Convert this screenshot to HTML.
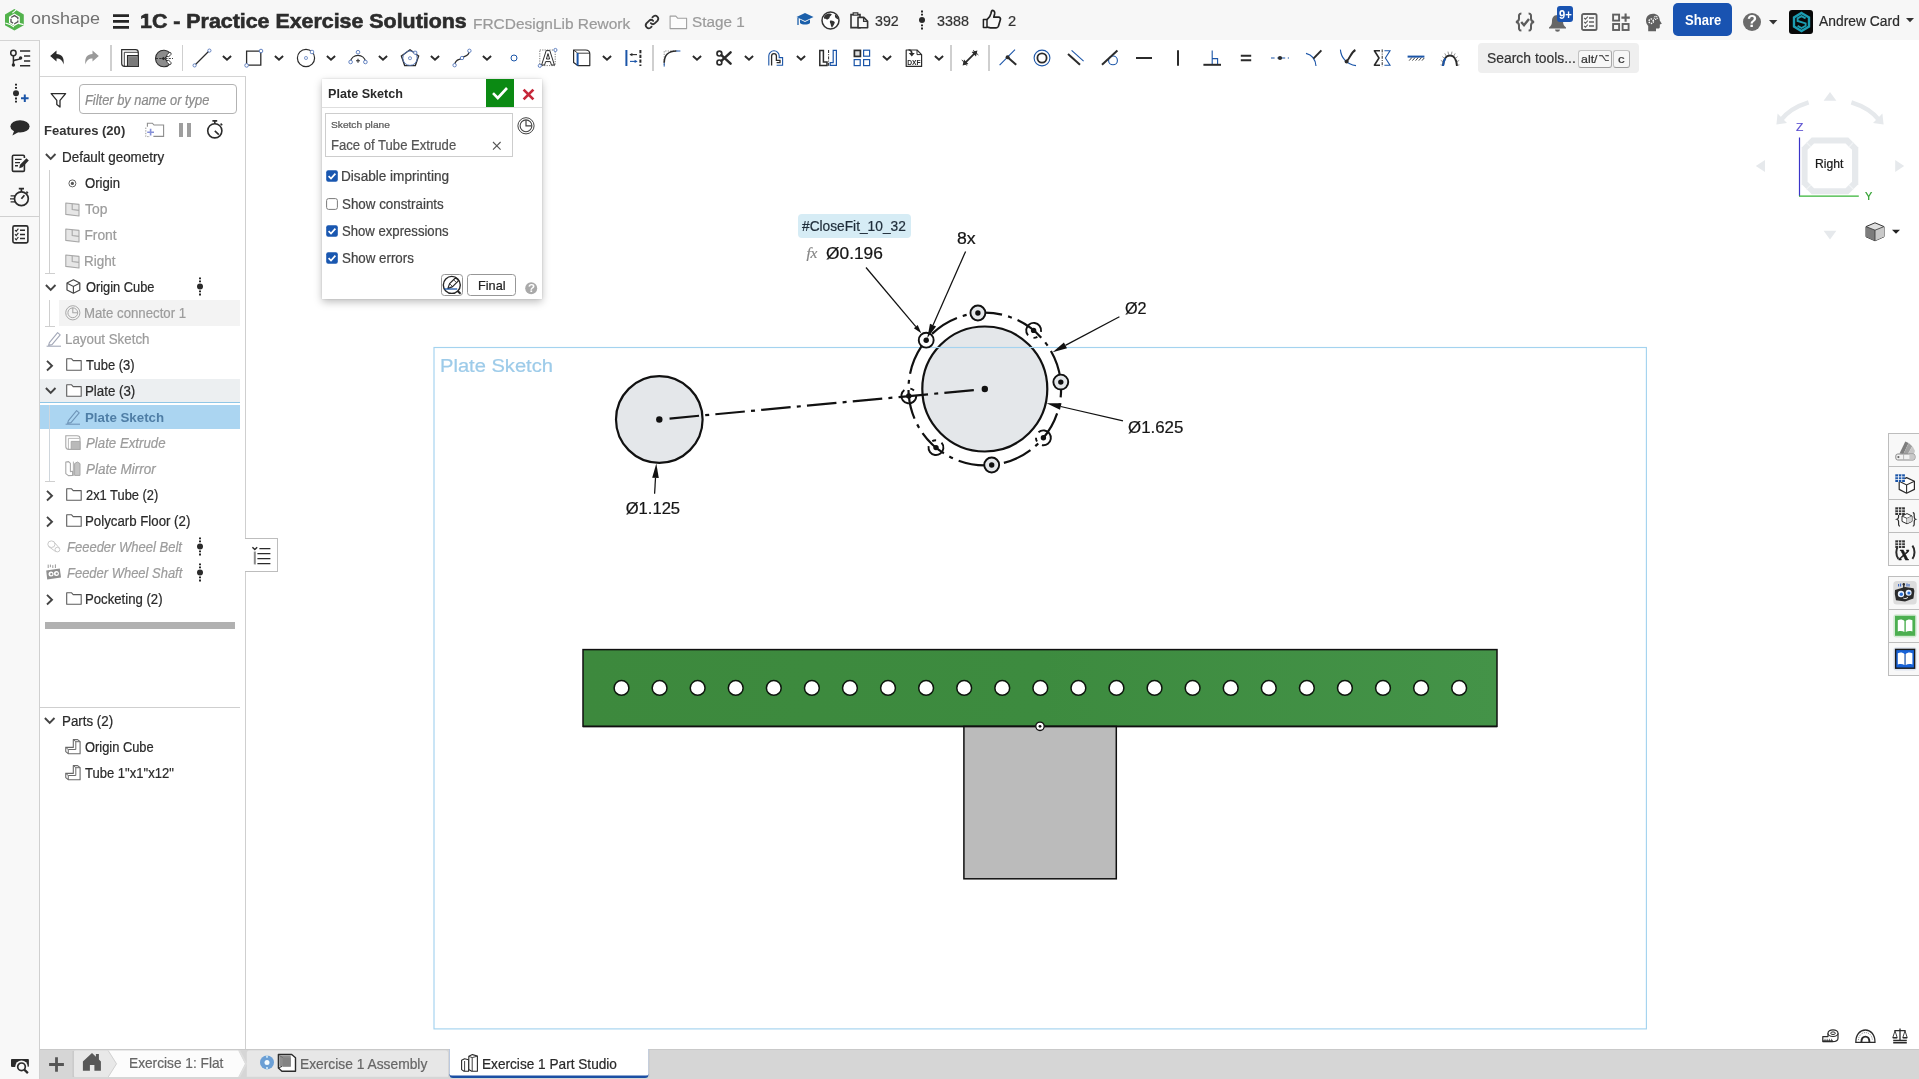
<!DOCTYPE html>
<html lang="en"><head><meta charset="utf-8"><title>1C - Practice Exercise Solutions | Exercise 1 Part Studio</title>
<style>
html,body{margin:0;padding:0;overflow:hidden}
body{width:1919px;height:1079px;position:relative;overflow:hidden;background:#fff;font-family:"Liberation Sans",sans-serif;color:#222}
.b{position:absolute;box-sizing:border-box;overflow:visible}
.t{position:absolute;white-space:nowrap;line-height:1;transform-origin:0 50%;-webkit-text-stroke:0.22px}
svg{display:block}
#root{position:absolute;left:0;top:0;width:1919px;height:1079px;overflow:hidden;will-change:transform}
</style></head><body><div id="root">
<div class="b" style="left:0px;top:0px;width:1919px;height:40px;background:#f7f7f7"></div>
<div class="b" style="left:40px;top:40px;width:1879px;height:36px;background:#fff"></div>
<svg class="b" style="left:4px;top:8px;" width="22" height="24" viewBox="0 0 22 24">
<path d="M10.4 1 L19.8 6.4 V17.2 L10.4 22.6 L1 17.2 V6.4 Z" fill="#52b24c"/>
<path d="M10.4 5.6 L15.8 8.7 V14.9 L10.4 18 L5 14.9 V8.7 Z" fill="#fff"/>
<path d="M12.4 1.6 L8.4 5.2 M19.6 16.6 L14.6 15.4 M1.4 15 L5.8 16.4 L10 19" stroke="#fff" stroke-width="1.1" fill="none"/>
<path d="M10.4 7.6 L13.8 9.6 V13.8 L10.4 15.8 L7 13.8 V9.6 Z" fill="none" stroke="#5a5a5a" stroke-width="1.4" stroke-dasharray="5.5 1.3"/>
</svg>
<span class="t" style="left:30.78px;top:11.00px;font-size:16px;color:#707070;transform:scaleX(1.1243);-webkit-text-stroke:0;">onshape</span>
<svg class="b" style="left:113px;top:13px;" width="17" height="17" viewBox="0 0 17 17"><path d="M0 2.55H16M0 8.45H16M0 14.4H16" stroke="#262626" stroke-width="2.7" fill="none"/></svg>
<span class="t" style="left:139.66px;top:11.00px;font-size:20px;color:#2c2c2c;font-weight:700;-webkit-text-stroke:0;transform:scaleX(1.0687);-webkit-text-stroke:0.6px;">1C - Practice Exercise Solutions</span>
<span class="t" style="left:473.26px;top:16.00px;font-size:15px;color:#9a9a9a;transform:scaleX(1.0305);">FRCDesignLib Rework</span>
<svg class="b" style="left:644px;top:14px;" width="16" height="16" viewBox="0 0 16 16"><g fill="none" stroke="#333" stroke-width="1.8" stroke-linecap="round"><path d="M6.8 9.2 a3 3 0 0 0 4.2 0 l2.6-2.6 a3 3 0 0 0-4.2-4.2 l-1 1"/><path d="M9.2 6.8 a3 3 0 0 0-4.2 0 l-2.6 2.6 a3 3 0 0 0 4.2 4.2 l1-1"/></g></svg>
<svg class="b" style="left:668.6px;top:14.6px;" width="19" height="15" viewBox="0 0 19 15"><path d="M1.1 13.6 V1.1 H6.8 L8.6 3.2 H17.6 V13.6 Z" fill="#fcfcfc" stroke="#a0a0a0" stroke-width="1.1" stroke-linejoin="round"/></svg>
<span class="t" style="left:691.81px;top:14.00px;font-size:15.5px;color:#9a9a9a;transform:scaleX(0.9853);">Stage 1</span>
<svg class="b" style="left:796px;top:12px;" width="18" height="16" viewBox="0 0 18 16"><path d="M9 1 L17.5 5 L9 9 L0.5 5 Z" fill="#1b5faa"/><path d="M4 7.5 V11 C6 13 12 13 14 11 V7.5 L9 10 Z" fill="#1b5faa"/><path d="M2 6 V13" stroke="#1b5faa" stroke-width="1.3"/></svg>
<svg class="b" style="left:821px;top:11px;" width="19" height="19" viewBox="0 0 19 19"><circle cx="9.5" cy="9.5" r="8.5" fill="#fff" stroke="#333" stroke-width="1.5"/><path d="M4.6 3.8 C6.6 2.2 9.4 2.2 10.8 3.2 C10.2 4.8 8.8 5 8.6 6.4 C8.4 7.6 7.2 7.6 6.6 8.6 C5.6 8.4 4.6 7.4 3.2 7.8 C2.6 6.2 3.4 4.8 4.6 3.8 Z M9.2 9.6 C10.8 9 12.8 9.8 13.8 11.2 C13.6 13 12.2 14.6 11 16.8 C10 15.6 9.8 14 9.6 12.8 C8.8 11.8 8.6 10.4 9.2 9.6 Z M14.2 3.4 C15.8 4.4 17.2 6.2 17.6 8.4 C16.6 8.4 15.8 7.4 15 7.2 C14 6.2 13.6 4.6 14.2 3.4 Z" fill="#333"/></svg>
<svg class="b" style="left:850px;top:11.5px;" width="19" height="17" viewBox="0 0 19 17"><path d="M1 2.6 H10 V15.6 H1 Z" fill="none" stroke="#333" stroke-width="1.6"/><path d="M3.2 0.8 H7.8 V3 H3.2 Z" fill="#f7f7f7" stroke="#333" stroke-width="1.2"/><path d="M8 5.4 H13.8 L17.6 9.2 V15.8 H8 Z" fill="#f7f7f7" stroke="#333" stroke-width="1.6" stroke-linejoin="round"/><path d="M13.6 5.6 V9.4 H17.4" fill="none" stroke="#333" stroke-width="1.3"/></svg>
<span class="t" style="left:874.97px;top:13.00px;font-size:15px;color:#333;transform:scaleX(0.9479);">392</span>
<svg class="b" style="left:917px;top:10px;" width="10" height="20" viewBox="0 0 10 20"><circle cx="5" cy="10" r="3" fill="#2a2a2a"/><path d="M4.1 0.6h1.8v1.8h-1.8z M4.1 3.8h1.8v1.8h-1.8z M4.1 14.4h1.8v1.8h-1.8z M4.1 17.6h1.8v1.8h-1.8z" fill="#111"/></svg>
<span class="t" style="left:937.46px;top:13.00px;font-size:15px;color:#333;transform:scaleX(0.9542);">3388</span>
<svg class="b" style="left:982px;top:9px;" width="20" height="21" viewBox="0 0 20 21"><path d="M1.4 10.4 H5 V18.6 H1.4 Z" fill="none" stroke="#222" stroke-width="1.5" stroke-linejoin="round"/><path d="M5 10.6 C7 9 8.6 6.6 9 4.4 C9.2 3 9.4 1.6 10.6 1.4 C12.4 1.4 13 3.2 12.6 5 L11.8 8.2 H16.6 C18 8.2 18.8 9.4 18.4 10.6 L16.4 17.2 C16 18.2 15.2 18.8 14.2 18.8 H8.4 C7 18.8 6.2 18.2 5 18" fill="none" stroke="#222" stroke-width="1.7" stroke-linejoin="round"/></svg>
<span class="t" style="left:1008.27px;top:13.00px;font-size:15px;color:#333;transform:scaleX(0.9763);">2</span>
<svg class="b" style="left:1515px;top:12px;" width="20" height="20" viewBox="0 0 20 20"><g fill="none" stroke="#5c5c5c" stroke-width="2"><path d="M6.4 1.4 C3.4 1.4 4 4 4 6.6 C4 8.6 3 9.6 1 10 C3 10.4 4 11.4 4 13.4 C4 16 3.4 18.6 6.4 18.6"/><path d="M13.6 1.4 C16.6 1.4 16 4 16 6.6 C16 8.6 17 9.6 19 10 C17 10.4 16 11.4 16 13.4 C16 16 16.6 18.6 13.6 18.6"/><path d="M6.2 10 L9 13.2 L14 7" stroke-width="2.4"/></g></svg>
<svg class="b" style="left:1548px;top:14px;" width="19" height="18" viewBox="0 0 19 18"><path d="M9.5 1 C5.5 1 4 4 4 7 C4 10.5 3 12 1 13.5 V14.5 H18 V13.5 C16 12 15 10.5 15 7 C15 4 13.5 1 9.5 1 Z" fill="#666"/><path d="M7 15.5 a2.5 2.3 0 0 0 5 0 Z" fill="#666"/></svg>
<div class="b" style="left:1557px;top:6px;width:16px;height:15.8px;background:#1953b1;border-radius:3px"></div>
<span class="t" style="left:1559.03px;top:9.00px;font-size:12px;color:#fff;font-weight:700;-webkit-text-stroke:0;transform:scaleX(0.9368);">9+</span>
<svg class="b" style="left:1581px;top:13px;" width="17" height="18" viewBox="0 0 17 18"><rect x="1" y="1" width="14.6" height="16" rx="1.6" fill="none" stroke="#606060" stroke-width="1.8"/><path d="M8 5H13M8 9H13M8 13H13" stroke="#606060" stroke-width="1.7"/><path d="M3.2 5 L4.5 6.3 L6.8 3.6 M3.2 9 L4.5 10.3 L6.8 7.6 M3.2 13 L4.5 14.3 L6.8 11.6" fill="none" stroke="#606060" stroke-width="1.1"/></svg>
<svg class="b" style="left:1612px;top:13px;" width="19" height="18" viewBox="0 0 19 18"><g fill="none" stroke="#606060" stroke-width="1.9"><rect x="1.1" y="1.6" width="6" height="6"/><rect x="1.1" y="11" width="6" height="6"/><rect x="10.6" y="11" width="6" height="6"/><path d="M13.6 0.4V8.8M9.4 4.6H17.8" stroke-width="2.1"/></g></svg>
<svg class="b" style="left:1645px;top:13px;" width="18" height="19" viewBox="0 0 18 19"><path d="M8 0.8 C3.5 0.8 1 4 1 7.5 C1 10 2 11.5 3.2 13 V18.2 H11 V15.6 H13.2 C14.4 15.6 14.8 14.8 14.8 13.8 V11.5 L16.8 10.8 L14.8 7.5 C14.8 3.5 12 0.8 8 0.8 Z" fill="#606060"/><circle cx="6.2" cy="8.2" r="2.2" fill="none" stroke="#fff" stroke-width="1.5" stroke-dasharray="1.3 0.9"/><circle cx="10.8" cy="4.8" r="1.5" fill="none" stroke="#fff" stroke-width="1.2" stroke-dasharray="1 0.7"/></svg>
<div class="b" style="left:1673px;top:3px;width:58.8px;height:33px;background:#1953b1;border-radius:5px"></div>
<span class="t" style="left:1685.14px;top:12.00px;font-size:15.4px;color:#fff;font-weight:700;-webkit-text-stroke:0;transform:scaleX(0.8483);">Share</span>
<svg class="b" style="left:1743px;top:13px;" width="18" height="18" viewBox="0 0 18 18"><circle cx="9" cy="9" r="9" fill="#6b6b6b"/></svg>
<span class="t" style="left:1747.06px;top:14.00px;font-size:16px;color:#fff;font-weight:700;-webkit-text-stroke:0;transform:scaleX(1.0294);">?</span>
<svg class="b" style="left:1769px;top:20px;" width="9" height="5" viewBox="0 0 9 5"><path d="M0 0H8.4L4.2 4.4Z" fill="#333"/></svg>
<div class="b" style="left:1789px;top:10px;width:24px;height:24px;background:#080808;border-radius:3px"></div>
<svg class="b" style="left:1790.5px;top:11px;" width="21" height="22" viewBox="0 0 21 22"><path d="M10.5 2 L18 6.4 V15.6 L10.5 20 L3 15.6 V6.4 Z" fill="none" stroke="#1c9db2" stroke-width="2.4"/><path d="M14.6 7.4 L10.5 5.2 L6.6 7.4 V10 L14.6 12.4 V14.8 L10.5 17 L6.6 14.8" fill="none" stroke="#1c9db2" stroke-width="1.9"/></svg>
<span class="t" style="left:1818.80px;top:13.00px;font-size:15.4px;color:#2c2c2c;transform:scaleX(0.8999);">Andrew Card</span>
<svg class="b" style="left:1906px;top:18px;" width="9" height="5" viewBox="0 0 9 5"><path d="M0 0H8L4 4.2Z" fill="#333"/></svg>
<svg class="b" style="left:48.7px;top:48px;" width="20" height="20" viewBox="0 0 20 20"><path transform="translate(0,0.8)" d="M1.2 7.2 L7.5 1.8 V5.2 C12.5 5.2 15.5 8.5 14.6 15.6 C13.4 11.4 11.3 9.6 7.5 9.6 V12.8 Z" fill="#2b2b2b"/></svg>
<svg class="b" style="left:80px;top:48px;" width="20" height="20" viewBox="0 0 20 20"><path transform="translate(0,0.8)" d="M18.8 7.2 L12.5 1.8 V5.2 C7.5 5.2 4.5 8.5 5.4 15.6 C6.6 11.4 8.7 9.6 12.5 9.6 V12.8 Z" fill="#9a9a9a"/></svg>
<svg class="b" style="left:120px;top:48px;" width="20" height="20" viewBox="0 0 20 20"><path d="M1.7 1.7 H15.5 Q18.3 1.7 18.3 4.5 V18.3 H4.5 Q1.7 18.3 1.7 15.5 Z" fill="#fff" stroke="#2b2b2b" stroke-width="1.2"/><path d="M4.3 4.3 H18 M4.3 4.3 V18" stroke="#2b2b2b" stroke-width="0.9" fill="none"/><path d="M7.5 7.5 H18.3 V18.3 H7.5 Z" fill="#8a8a8a" stroke="#2b2b2b" stroke-width="1.1"/><path d="M9.3 9.3 H18 V18 H9.3 Z" fill="#7a7a7a"/></svg>
<svg class="b" style="left:154px;top:48px;" width="20" height="20" viewBox="0 0 20 20"><path d="M16.2 5.2 A8.3 8.3 0 1 0 16.2 15.8 L10.6 10.5 Z" fill="#8c8c8c" stroke="#2b2b2b" stroke-width="1.1" stroke-linejoin="round"/><ellipse cx="15" cy="6.6" rx="2.6" ry="1.5" transform="rotate(-42 15 6.6)" fill="#fff" stroke="#2b2b2b" stroke-width="0.8"/><ellipse cx="15" cy="14.4" rx="2.6" ry="1.5" transform="rotate(42 15 14.4)" fill="#fff" stroke="#2b2b2b" stroke-width="0.8"/><path d="M2 10.5 H19" stroke="#2b2b2b" stroke-width="0.9" stroke-dasharray="2 1.2"/><path d="M7 10.5 L10 8.7 V12.3 Z" fill="#2b2b2b"/></svg>
<svg class="b" style="left:192px;top:48px;" width="20" height="20" viewBox="0 0 20 20"><path d="M3 17 L17 3" stroke="#2b2b2b" stroke-width="1.3"/><circle cx="2.6" cy="17.4" r="1.6" fill="#fff" stroke="#5577bb" stroke-width="0.9"/><circle cx="17.4" cy="2.6" r="1.6" fill="#fff" stroke="#5577bb" stroke-width="0.9"/></svg>
<svg class="b" style="left:244px;top:48px;" width="20" height="20" viewBox="0 0 20 20"><path d="M2.6 3.2 H16.8 V17.2 H2.6 Z" fill="none" stroke="#2b2b2b" stroke-width="1.3"/><circle cx="2.6" cy="17.4" r="1.8" fill="#fff" stroke="#5577bb" stroke-width="0.9"/><circle cx="17" cy="3" r="1.8" fill="#fff" stroke="#5577bb" stroke-width="0.9"/></svg>
<svg class="b" style="left:296px;top:48px;" width="20" height="20" viewBox="0 0 20 20"><circle cx="10" cy="10" r="8.6" fill="none" stroke="#2b2b2b" stroke-width="1.2"/><rect x="8.6" y="8.6" width="2.8" height="2.8" rx="1" fill="none" stroke="#5577bb" stroke-width="0.9"/><rect x="14.4" y="2.4" width="3.2" height="3.2" rx="0.8" fill="#fff" stroke="#5577bb" stroke-width="0.9"/></svg>
<svg class="b" style="left:348px;top:48px;" width="20" height="20" viewBox="0 0 20 20"><path d="M2.2 14 A8 8.6 0 0 1 17.8 14" fill="none" stroke="#2b2b2b" stroke-width="1.2"/><path d="M8 12.8 H12 M10 10.8 V14.8" stroke="#2b2b2b" stroke-width="1.1"/><circle cx="10" cy="4.2" r="1.8" fill="#fff" stroke="#5577bb" stroke-width="0.9"/><circle cx="2.6" cy="14" r="1.8" fill="#fff" stroke="#5577bb" stroke-width="0.9"/><circle cx="17.4" cy="14" r="1.8" fill="#fff" stroke="#5577bb" stroke-width="0.9"/></svg>
<svg class="b" style="left:400px;top:48px;" width="20" height="20" viewBox="0 0 20 20"><path d="M10 1.8 L18.6 8 L15.3 17.6 H4.7 L1.4 8 Z" fill="none" stroke="#2b2b2b" stroke-width="1.4"/><circle cx="10" cy="10.2" r="7.2" fill="none" stroke="#5577bb" stroke-width="0.9"/><rect x="8.6" y="8.8" width="2.8" height="2.8" rx="1" fill="none" stroke="#5577bb" stroke-width="0.9"/><rect x="13.8" y="3.2" width="3" height="3" rx="0.8" fill="#fff" stroke="#5577bb" stroke-width="0.9"/></svg>
<svg class="b" style="left:452px;top:48px;" width="20" height="20" viewBox="0 0 20 20"><path d="M2.6 17.2 C3.5 10 8 12.5 10 10 C12 7.5 16.8 9.5 17.4 2.8" fill="none" stroke="#2b2b2b" stroke-width="1.3"/><circle cx="2.6" cy="17.2" r="1.7" fill="#fff" stroke="#5577bb" stroke-width="0.9"/><circle cx="10" cy="10" r="1.7" fill="#fff" stroke="#5577bb" stroke-width="0.9"/><circle cx="17.4" cy="2.8" r="1.7" fill="#fff" stroke="#5577bb" stroke-width="0.9"/></svg>
<svg class="b" style="left:504px;top:48px;" width="20" height="20" viewBox="0 0 20 20"><circle cx="10" cy="10" r="3" fill="#fff" stroke="#1b55a8" stroke-width="1"/></svg>
<svg class="b" style="left:538px;top:48px;" width="20" height="20" viewBox="0 0 20 20"><path d="M1.8 2 H17.2 V17.6 H1.8 Z" fill="none" stroke="#555" stroke-width="0.8" stroke-dasharray="1.2 1.2"/><path d="M3.6 17 L8.2 2.6 H11.8 L16.4 17 H13.4 L12.4 13.6 H7.6 L6.6 17 Z M8.4 11 H11.6 L10 5.6 Z" fill="#fff" stroke="#2b2b2b" stroke-width="1" stroke-linejoin="round"/><circle cx="17.4" cy="2" r="1.6" fill="#fff" stroke="#5577bb" stroke-width="0.9"/><circle cx="1.8" cy="17.8" r="1.6" fill="#fff" stroke="#5577bb" stroke-width="0.9"/></svg>
<svg class="b" style="left:572px;top:48px;" width="20" height="20" viewBox="0 0 20 20"><path d="M1.6 2 H13.5 Q17.8 2 17.8 6 V17.6 H5.8 L1.6 14.4 Z" fill="#fff" stroke="#2b2b2b" stroke-width="1.2" stroke-linejoin="round"/><path d="M1.8 2.2 L5.8 5.2 H17.6" fill="none" stroke="#2b2b2b" stroke-width="0.9"/><path d="M5.6 5 V17.6" stroke="#1b55a8" stroke-width="2"/></svg>
<svg class="b" style="left:624px;top:48px;" width="20" height="20" viewBox="0 0 20 20"><path d="M2.4 2 V18" stroke="#1b55a8" stroke-width="2"/><path d="M16.4 2 V18" stroke="#2b2b2b" stroke-width="2" stroke-dasharray="3.2 1.6"/><path d="M6 6.6 H13" stroke="#2b2b2b" stroke-width="1.1"/><path d="M5.4 6.6 L8.4 4.9 V8.3 Z" fill="#2b2b2b"/><path d="M6 13.4 H12.6" stroke="#1b55a8" stroke-width="1.1"/><path d="M13.6 13.4 L10.6 11.7 V15.1 Z" fill="#1b55a8"/></svg>
<svg class="b" style="left:661.5px;top:48px;" width="20" height="20" viewBox="0 0 20 20"><path d="M2.2 17 V3 H16" fill="none" stroke="#777" stroke-width="0.8" stroke-dasharray="1.3 1.2"/><path d="M2.2 18.6 V14.6 M14 3 H18.4" stroke="#1b55a8" stroke-width="1"/><path d="M2.2 14.8 C2.2 7.5 6.5 3 14.2 3" fill="none" stroke="#2b2b2b" stroke-width="1.6"/></svg>
<svg class="b" style="left:713.5px;top:48px;" width="20" height="20" viewBox="0 0 20 20"><circle cx="5.4" cy="5.6" r="2.4" fill="none" stroke="#2b2b2b" stroke-width="1.7"/><circle cx="5.4" cy="14.4" r="2.4" fill="none" stroke="#2b2b2b" stroke-width="1.7"/><path d="M7.4 7.2 L16.6 15.6 M7.4 12.8 L16.6 4.4" stroke="#2b2b2b" stroke-width="2.5" stroke-linecap="round"/></svg>
<svg class="b" style="left:766px;top:48px;" width="20" height="20" viewBox="0 0 20 20"><path d="M2.8 17.4 V8 A5.2 5.2 0 0 1 13.2 8 V9.6 H16.6 V17.2 H10.6" fill="none" stroke="#1b55a8" stroke-width="1.1"/><path d="M5.6 17.4 V8 A2.4 2.4 0 0 1 10.4 8 V12.4 H14 V14.6 H10.6" fill="none" stroke="#2b2b2b" stroke-width="1.3"/></svg>
<svg class="b" style="left:818px;top:48px;" width="20" height="20" viewBox="0 0 20 20"><path d="M1.8 2.4 H5.4 V14 H9 V17.4 H1.8 Z" fill="#fff" stroke="#2b2b2b" stroke-width="1.5"/><path d="M10.6 2 V18" stroke="#2b2b2b" stroke-width="1" stroke-dasharray="3 1.2 1 1.2"/><path d="M18.4 2.4 H15.2 V14.6 H12.2 V17.4 H18.4 Z" fill="none" stroke="#1b55a8" stroke-width="1.2"/></svg>
<svg class="b" style="left:852px;top:48px;" width="20" height="20" viewBox="0 0 20 20"><rect x="2.4" y="2.4" width="6" height="6" fill="#ddd" stroke="#2b2b2b" stroke-width="1.7"/><rect x="11.6" y="2.2" width="6" height="6" fill="none" stroke="#1b55a8" stroke-width="1.2"/><rect x="2.2" y="11.6" width="6" height="6" fill="none" stroke="#1b55a8" stroke-width="1.2"/><rect x="11.6" y="11.6" width="6" height="6" fill="none" stroke="#1b55a8" stroke-width="1.2"/></svg>
<svg class="b" style="left:904px;top:48px;" width="20" height="20" viewBox="0 0 20 20"><path d="M2.2 2 H13 L17.6 6.6 V18.4 H2.2 Z" fill="#fff" stroke="#2b2b2b" stroke-width="1.2" stroke-linejoin="round"/><path d="M13 2 V6.6 H17.6" fill="none" stroke="#2b2b2b" stroke-width="1"/><path d="M4.5 1.2 C7 1.2 8.6 2.6 8.6 5 H10.8 L7.8 8.6 L4.8 5 H6.8 C6.8 3.4 6 2.6 4.5 2.2 Z" fill="#2b2b2b"/><text x="3.2" y="16.6" font-family="Liberation Sans,sans-serif" font-weight="700" font-size="6.6" fill="#2b2b2b" textLength="13.4" lengthAdjust="spacingAndGlyphs">DXF</text></svg>
<svg class="b" style="left:960px;top:48px;" width="20" height="20" viewBox="0 0 20 20"><path d="M4.4 15.6 L15.6 4.4" stroke="#2b2b2b" stroke-width="1.8"/><path d="M2.6 17.4 L4 11.6 L8.4 16 Z M17.4 2.6 L11.6 4 L16 8.4 Z" fill="#2b2b2b"/><path d="M13.2 2.2 L18.4 7 M1.8 11.8 L6.8 17.6" stroke="#2b2b2b" stroke-width="0.9"/></svg>
<svg class="b" style="left:997.5px;top:48px;" width="20" height="20" viewBox="0 0 20 20"><path d="M1.6 17.2 L17 1.6" stroke="#1b55a8" stroke-width="1.1"/><path d="M9.6 9.2 L18.2 16.8" stroke="#2b2b2b" stroke-width="2"/><circle cx="9.6" cy="9.2" r="2" fill="#2b2b2b"/></svg>
<svg class="b" style="left:1032px;top:48px;" width="20" height="20" viewBox="0 0 20 20"><circle cx="10" cy="10" r="7.9" fill="none" stroke="#1b55a8" stroke-width="1.1"/><circle cx="10" cy="10" r="4.6" fill="none" stroke="#2b2b2b" stroke-width="1.8"/></svg>
<svg class="b" style="left:1065.5px;top:48px;" width="20" height="20" viewBox="0 0 20 20"><path d="M2 6 L14 16.8" stroke="#2b2b2b" stroke-width="2"/><path d="M5.6 2.4 L17.6 13.2" stroke="#1b55a8" stroke-width="1.1"/></svg>
<svg class="b" style="left:1100px;top:48px;" width="20" height="20" viewBox="0 0 20 20"><circle cx="13" cy="12.4" r="4.4" fill="none" stroke="#1b55a8" stroke-width="1.1"/><path d="M2 16.8 L17.4 2.4" stroke="#2b2b2b" stroke-width="2"/></svg>
<svg class="b" style="left:1133.7px;top:48px;" width="20" height="20" viewBox="0 0 20 20"><path d="M2 10 H18" stroke="#2b2b2b" stroke-width="2"/></svg>
<svg class="b" style="left:1167.7px;top:48px;" width="20" height="20" viewBox="0 0 20 20"><path d="M10 2.2 V17.8" stroke="#2b2b2b" stroke-width="2"/></svg>
<svg class="b" style="left:1201.8px;top:48px;" width="20" height="20" viewBox="0 0 20 20"><path d="M10.2 2.4 V16.6 M10.2 10.6 H15.6 V16.6" fill="none" stroke="#1b55a8" stroke-width="1.1"/><path d="M1.4 16.8 H19" stroke="#2b2b2b" stroke-width="2"/></svg>
<svg class="b" style="left:1236px;top:48px;" width="20" height="20" viewBox="0 0 20 20"><path d="M4.8 7.8 H15.2 M4.8 12.2 H15.2" stroke="#2b2b2b" stroke-width="2"/></svg>
<svg class="b" style="left:1270px;top:48px;" width="20" height="20" viewBox="0 0 20 20"><path d="M1 10 H19" stroke="#1b55a8" stroke-width="1.1" stroke-dasharray="3.6 2.6 8 2.6 3.6"/><circle cx="10" cy="10" r="2.1" fill="#2b2b2b"/></svg>
<svg class="b" style="left:1303.7px;top:48px;" width="20" height="20" viewBox="0 0 20 20"><path d="M2 5.4 C7.5 6.8 11.4 11 12 18" fill="none" stroke="#1b55a8" stroke-width="1.1"/><path d="M9.4 10.6 L17.4 2.4" stroke="#2b2b2b" stroke-width="2"/></svg>
<svg class="b" style="left:1337.5px;top:48px;" width="20" height="20" viewBox="0 0 20 20"><path d="M2.4 1.6 C3 9.5 8.5 16.4 18 17.6" fill="none" stroke="#1b55a8" stroke-width="1.1"/><path d="M8.4 13.4 C12 11 12.6 4.4 17.4 2" fill="none" stroke="#2b2b2b" stroke-width="2"/><circle cx="8.6" cy="13.4" r="2" fill="#2b2b2b"/></svg>
<svg class="b" style="left:1372px;top:48px;" width="20" height="20" viewBox="0 0 20 20"><path d="M8 2.8 H2.4 L7 10 L2.4 17.2 H8" fill="none" stroke="#2b2b2b" stroke-width="1.6" stroke-linejoin="round"/><path d="M12.4 2.8 H18 L13.4 10 L18 17.2 H12.4" fill="none" stroke="#1b55a8" stroke-width="1.1"/><path d="M10.2 1.4 V18.6" stroke="#2b2b2b" stroke-width="1" stroke-dasharray="3 1.2 1 1.2"/></svg>
<svg class="b" style="left:1405.5px;top:48px;" width="20" height="20" viewBox="0 0 20 20"><path d="M1.6 8.6 H18.4" stroke="#1b55a8" stroke-width="2"/><path d="M3.2 12.6 L5.8 9.6 M6.4 12.6 L9 9.6 M9.6 12.6 L12.2 9.6 M12.8 12.6 L15.4 9.6 M16 12.6 L18.2 10" stroke="#2b2b2b" stroke-width="0.9"/></svg>
<svg class="b" style="left:1440px;top:48px;" width="20" height="20" viewBox="0 0 20 20"><path d="M3 18 C3.6 11 6.4 7.6 10 7.6 C13.6 7.6 16.4 11 17 18" fill="none" stroke="#2b2b2b" stroke-width="2"/><path d="M2.6 17.4 L0.6 16.8 M3 13.6 L0.8 12.4 M4.4 10.4 L2.4 8.6 M6.2 8 L4.8 5.4 M8.6 6.8 L8 3.6 M11.4 6.8 L12 3.6 M13.8 8 L15.2 5.4 M15.6 10.4 L17.6 8.6 M17 13.6 L19.2 12.4 M17.4 17.4 L19.4 16.8" stroke="#777" stroke-width="0.8"/><path d="M3 18 C3.3 14.5 4.2 12 5.4 10.4" fill="none" stroke="#1b55a8" stroke-width="2"/></svg>
<svg class="b" style="left:222px;top:55.2px;" width="10" height="6" viewBox="0 0 10 6"><path d="M0.9 1 L5 4.8 L9.1 1" fill="none" stroke="#2b2b2b" stroke-width="1.9"/></svg>
<svg class="b" style="left:274px;top:55.2px;" width="10" height="6" viewBox="0 0 10 6"><path d="M0.9 1 L5 4.8 L9.1 1" fill="none" stroke="#2b2b2b" stroke-width="1.9"/></svg>
<svg class="b" style="left:326px;top:55.2px;" width="10" height="6" viewBox="0 0 10 6"><path d="M0.9 1 L5 4.8 L9.1 1" fill="none" stroke="#2b2b2b" stroke-width="1.9"/></svg>
<svg class="b" style="left:378px;top:55.2px;" width="10" height="6" viewBox="0 0 10 6"><path d="M0.9 1 L5 4.8 L9.1 1" fill="none" stroke="#2b2b2b" stroke-width="1.9"/></svg>
<svg class="b" style="left:429.8px;top:55.2px;" width="10" height="6" viewBox="0 0 10 6"><path d="M0.9 1 L5 4.8 L9.1 1" fill="none" stroke="#2b2b2b" stroke-width="1.9"/></svg>
<svg class="b" style="left:482px;top:55.2px;" width="10" height="6" viewBox="0 0 10 6"><path d="M0.9 1 L5 4.8 L9.1 1" fill="none" stroke="#2b2b2b" stroke-width="1.9"/></svg>
<svg class="b" style="left:602px;top:55.2px;" width="10" height="6" viewBox="0 0 10 6"><path d="M0.9 1 L5 4.8 L9.1 1" fill="none" stroke="#2b2b2b" stroke-width="1.9"/></svg>
<svg class="b" style="left:692px;top:55.2px;" width="10" height="6" viewBox="0 0 10 6"><path d="M0.9 1 L5 4.8 L9.1 1" fill="none" stroke="#2b2b2b" stroke-width="1.9"/></svg>
<svg class="b" style="left:744px;top:55.2px;" width="10" height="6" viewBox="0 0 10 6"><path d="M0.9 1 L5 4.8 L9.1 1" fill="none" stroke="#2b2b2b" stroke-width="1.9"/></svg>
<svg class="b" style="left:796px;top:55.2px;" width="10" height="6" viewBox="0 0 10 6"><path d="M0.9 1 L5 4.8 L9.1 1" fill="none" stroke="#2b2b2b" stroke-width="1.9"/></svg>
<svg class="b" style="left:882px;top:55.2px;" width="10" height="6" viewBox="0 0 10 6"><path d="M0.9 1 L5 4.8 L9.1 1" fill="none" stroke="#2b2b2b" stroke-width="1.9"/></svg>
<svg class="b" style="left:934px;top:55.2px;" width="10" height="6" viewBox="0 0 10 6"><path d="M0.9 1 L5 4.8 L9.1 1" fill="none" stroke="#2b2b2b" stroke-width="1.9"/></svg>
<div class="b" style="left:110.15px;top:45px;width:1.5px;height:26px;background:#cfcfcf"></div>
<div class="b" style="left:181.95px;top:45px;width:1.5px;height:26px;background:#cfcfcf"></div>
<div class="b" style="left:652.15px;top:45px;width:1.5px;height:26px;background:#cfcfcf"></div>
<div class="b" style="left:950.15px;top:45px;width:1.5px;height:26px;background:#cfcfcf"></div>
<div class="b" style="left:988.15px;top:45px;width:1.5px;height:26px;background:#cfcfcf"></div>
<div class="b" style="left:1478px;top:42.5px;width:160.7px;height:30.8px;background:#efefef;border-radius:4px"></div>
<span class="t" style="left:1487.37px;top:50.00px;font-size:15.4px;color:#333;transform:scaleX(0.9028);">Search tools...</span>
<div class="b" style="left:1578px;top:50px;width:34px;height:18.4px;background:#f7f7f7;border:1px solid #c2c2c2;border-bottom:1.6px solid #9c9c9c;border-right-color:#a8a8a8;border-radius:3px"></div>
<span class="t" style="left:1581.47px;top:54.00px;font-size:11.5px;color:#333;transform:scaleX(1.0764);">alt/</span>
<span class="t" style="left:1598.5px;top:52.5px;font-size:9.5px;font-family:'DejaVu Sans',sans-serif;color:#333">⌥</span>
<div class="b" style="left:1613px;top:50px;width:16.5px;height:18.4px;background:#f7f7f7;border:1px solid #c2c2c2;border-bottom:1.6px solid #9c9c9c;border-right-color:#a8a8a8;border-radius:3px"></div>
<span class="t" style="left:1617.74px;top:54.00px;font-size:11.5px;color:#333;transform:scaleX(1.1460);">c</span>
<div class="b" style="left:0px;top:40px;width:40px;height:1009px;background:#f8f8f8;border-top:1px solid #d4d4d4;border-right:1px solid #d0d0d0"></div>
<svg class="b" style="left:10px;top:48px;" width="21" height="20" viewBox="0 0 21 20"><circle cx="3.4" cy="5" r="2.7" fill="none" stroke="#2b2b2b" stroke-width="1.5"/><path d="M3.4 7.8 V16 M3.4 13.6 C3.4 10.8 10.4 12.6 10.4 10" fill="none" stroke="#2b2b2b" stroke-width="1.5"/><circle cx="3.4" cy="17" r="1.7" fill="#2b2b2b"/><circle cx="10.6" cy="10" r="1.7" fill="#2b2b2b"/><path d="M10 3 H20.2 M14 8 H20.2 M14 13 H20.2 M10 17.8 H20.2" stroke="#2b2b2b" stroke-width="1.5"/></svg>
<div class="b" style="left:0px;top:1049px;width:40px;height:30px;background:#f8f8f8;border-right:1px solid #d0d0d0"></div>
<svg class="b" style="left:12px;top:83px;" width="18" height="20" viewBox="0 0 18 20"><circle cx="4" cy="10.2" r="3" fill="#2b2b2b"/><path d="M3.1 0.8h1.8v1.8h-1.8z M3.1 4h1.8v1.8h-1.8z M3.1 14.6h1.8v1.8h-1.8z M3.1 17.8h1.8v1.8h-1.8z" fill="#111"/><path d="M12.8 11.4V19M9 15.2H16.6" stroke="#1b55a8" stroke-width="2"/></svg>
<svg class="b" style="left:10px;top:120px;" width="20" height="16" viewBox="0 0 20 16"><ellipse cx="10" cy="6.4" rx="9.6" ry="6.2" fill="#2b2b2b"/><path d="M4.4 10 L2.4 15.6 L9.6 11.6 Z" fill="#2b2b2b"/></svg>
<svg class="b" style="left:11px;top:154px;" width="19" height="19" viewBox="0 0 19 19"><path d="M13.4 9.6 V16.2 Q13.4 17.4 12.2 17.4 H2.6 Q1.4 17.4 1.4 16.2 V2.4 Q1.4 1.2 2.6 1.2 H12.2 Q13.4 1.2 13.4 2.4 V4" fill="none" stroke="#2b2b2b" stroke-width="1.6"/><path d="M4 5.4H10.6M4 8.6H9M4 11.8H7" stroke="#2b2b2b" stroke-width="1.4"/><path d="M8.2 14.2 L9 10.8 L15.4 4.2 L17.8 6.6 L11.4 13.2 Z" fill="#2b2b2b"/></svg>
<svg class="b" style="left:10px;top:187px;" width="20" height="20" viewBox="0 0 20 20"><circle cx="11.4" cy="11.8" r="6.9" fill="none" stroke="#2b2b2b" stroke-width="1.7"/><path d="M8.8 1.6H14M11.4 1.6V5M11.4 11.8L14.4 8.2" stroke="#2b2b2b" stroke-width="1.7" fill="none"/><path d="M16.4 4.6 L18 6.2" stroke="#2b2b2b" stroke-width="1.5"/><path d="M0.6 8.8H5M0 11.8H4M0.6 14.8H5" stroke="#2b2b2b" stroke-width="1.2"/></svg>
<div class="b" style="left:0px;top:216px;width:39px;height:1px;background:#d0d0d0"></div>
<svg class="b" style="left:12px;top:225px;" width="17" height="19" viewBox="0 0 17 19"><rect x="0.9" y="0.9" width="15" height="17" rx="1.6" fill="none" stroke="#2b2b2b" stroke-width="1.6"/><path d="M8 5.2H13M8 9.4H13M8 13.6H13" stroke="#2b2b2b" stroke-width="1.5"/><path d="M3 5 L4.2 6.4 L6.4 3.6 M3 9.2 L4.2 10.6 L6.4 7.8 M3 13.4 L4.2 14.8 L6.4 12" fill="none" stroke="#2b2b2b" stroke-width="1.1"/></svg>
<svg class="b" style="left:10px;top:1058px;" width="20" height="17" viewBox="0 0 20 17"><rect x="1" y="1.1" width="17.9" height="7.8" rx="0.8" fill="#2b2b2b"/><circle cx="11.5" cy="8.8" r="6.3" fill="#f8f8f8"/><circle cx="11.5" cy="8.8" r="3.8" fill="#f8f8f8" stroke="#2b2b2b" stroke-width="1.7"/><path d="M14.3 11.7 L17.9 15.1" stroke="#2b2b2b" stroke-width="2.3"/></svg>
<div class="b" style="left:40px;top:76px;width:206px;height:973px;background:#fff;border-top:1px solid #d4d4d4;border-right:1px solid #cfcfcf"></div>
<svg class="b" style="left:50px;top:92px;" width="17" height="17" viewBox="0 0 17 17"><path d="M1.2 1.6 H15.6 L10 8.4 V15 L6.8 12.6 V8.4 Z" fill="none" stroke="#2b2b2b" stroke-width="1.3" stroke-linejoin="round"/></svg>
<div class="b" style="left:79px;top:84px;width:158px;height:30px;border:1px solid #b3b3b3;border-radius:4px;background:#fff"></div>
<span class="t" style="left:85.11px;top:93.00px;font-size:14px;color:#8c8c8c;font-style:italic;transform:scaleX(0.9184);">Filter by name or type</span>
<span class="t" style="left:43.75px;top:124.00px;font-size:13.6px;color:#333;font-weight:700;-webkit-text-stroke:0;transform:scaleX(0.9599);">Features (20)</span>
<svg class="b" style="left:145px;top:122px;" width="20" height="16" viewBox="0 0 20 16"><path d="M2.4 4.8 V1.2 H7.4 L9 3 H18.6 V14.4 H8.4" fill="none" stroke="#8e8e8e" stroke-width="1.1"/><path d="M0.8 5.6V14.6H5" fill="none" stroke="#8e8e8e" stroke-width="0.9" stroke-dasharray="1.4 1.2"/><path d="M5.6 6.8V13.6M2.2 10.2H9" stroke="#8590d8" stroke-width="1.6"/></svg>
<div class="b" style="left:179px;top:123px;width:4px;height:13.8px;background:#9e9e9e"></div>
<div class="b" style="left:187px;top:123px;width:4px;height:13.8px;background:#9e9e9e"></div>
<svg class="b" style="left:206px;top:120px;" width="18" height="19" viewBox="0 0 18 19"><circle cx="8.8" cy="10.8" r="7.1" fill="none" stroke="#2b2b2b" stroke-width="1.6"/><path d="M6.4 0.9H11.2M8.8 0.9V4M8.8 10.8L12.8 14.6" stroke="#2b2b2b" stroke-width="1.6" fill="none"/><path d="M14.6 3.6 L16.2 5.2" stroke="#2b2b2b" stroke-width="1.5"/></svg>
<svg class="b" style="left:44.6px;top:153px;" width="12" height="8" viewBox="0 0 12 8"><path d="M0.9 1 L5.7 6 L10.5 1" fill="none" stroke="#444" stroke-width="1.9"/></svg>
<span class="t" style="left:62.43px;top:151.00px;font-size:13.8px;color:#2a2a2a;transform:scaleX(0.9723);">Default geometry</span>
<div class="b" style="left:49px;top:169.5px;width:1px;height:104px;background:#cfcfcf"></div>
<div class="b" style="left:45px;top:273px;width:9.5px;height:1px;background:#cfcfcf"></div>
<svg class="b" style="left:68px;top:179px;" width="9" height="9" viewBox="0 0 9 9"><circle cx="4.4" cy="4.4" r="3.5" fill="#fff" stroke="#555" stroke-width="0.9"/><circle cx="4.4" cy="4.4" r="1.6" fill="#555"/></svg>
<span class="t" style="left:84.91px;top:177.00px;font-size:13.8px;color:#2a2a2a;transform:scaleX(0.9539);">Origin</span>
<svg class="b" style="left:65px;top:201.5px;" width="15" height="15" viewBox="0 0 15 15"><path d="M0.8 1 L14 2.4 V14 L0.8 12.4 Z" fill="#e6e6e6" stroke="#a8a8a8" stroke-width="1.1" stroke-linejoin="round"/><path d="M7.2 1.8 V7.6 L14 8.4" fill="none" stroke="#a8a8a8" stroke-width="1.1"/></svg>
<span class="t" style="left:85.22px;top:203.00px;font-size:13.8px;color:#9c9c9c;transform:scaleX(1.0051);">Top</span>
<svg class="b" style="left:65px;top:227.5px;" width="15" height="15" viewBox="0 0 15 15"><path d="M0.8 1 L14 2.4 V14 L0.8 12.4 Z" fill="#e6e6e6" stroke="#a8a8a8" stroke-width="1.1" stroke-linejoin="round"/><path d="M7.2 1.8 V7.6 L14 8.4" fill="none" stroke="#a8a8a8" stroke-width="1.1"/></svg>
<span class="t" style="left:84.39px;top:229.00px;font-size:13.8px;color:#9c9c9c;">Front</span>
<svg class="b" style="left:65px;top:253.5px;" width="15" height="15" viewBox="0 0 15 15"><path d="M0.8 1 L14 2.4 V14 L0.8 12.4 Z" fill="#e6e6e6" stroke="#a8a8a8" stroke-width="1.1" stroke-linejoin="round"/><path d="M7.2 1.8 V7.6 L14 8.4" fill="none" stroke="#a8a8a8" stroke-width="1.1"/></svg>
<span class="t" style="left:84.42px;top:255.00px;font-size:13.8px;color:#9c9c9c;transform:scaleX(0.9758);">Right</span>
<svg class="b" style="left:44.6px;top:283.5px;" width="12" height="8" viewBox="0 0 12 8"><path d="M0.9 1 L5.7 6 L10.5 1" fill="none" stroke="#444" stroke-width="1.9"/></svg>
<svg class="b" style="left:66px;top:279px;" width="15" height="15" viewBox="0 0 15 15"><path d="M7.4 0.8 L13.8 4 V11 L7.4 14.2 L1 11 V4 Z" fill="#fff" stroke="#444" stroke-width="1.2" stroke-linejoin="round"/><path d="M1.2 4.2 L7.4 7.4 L13.6 4.2 M7.4 7.4 V14" fill="none" stroke="#444" stroke-width="1.1"/></svg>
<span class="t" style="left:85.72px;top:281.00px;font-size:13.8px;color:#2a2a2a;transform:scaleX(0.9294);">Origin Cube</span>
<svg class="b" style="left:196px;top:276.6px;" width="8" height="19" viewBox="0 0 8 19"><circle cx="4" cy="9.4" r="3" fill="#2a2a2a"/><path d="M3.1 0.4h1.8v1.8h-1.8z M3.1 3.5h1.8v1.8h-1.8z M3.1 13.5h1.8v1.8h-1.8z M3.1 16.6h1.8v1.8h-1.8z" fill="#111"/></svg>
<div class="b" style="left:58.5px;top:300px;width:181.5px;height:26px;background:#f3f3f3"></div>
<div class="b" style="left:49px;top:300px;width:1px;height:26px;background:#cfcfcf"></div>
<div class="b" style="left:45px;top:325.5px;width:9.5px;height:1px;background:#cfcfcf"></div>
<svg class="b" style="left:65px;top:305px;" width="16" height="16" viewBox="0 0 16 16"><circle cx="7.8" cy="7.8" r="7.1" fill="none" stroke="#a8a8a8" stroke-width="1"/><circle cx="7.8" cy="7.8" r="4.9" fill="none" stroke="#a8a8a8" stroke-width="1"/><path d="M7.8 2.6 V7.8 H13" fill="none" stroke="#a8a8a8" stroke-width="1.1"/></svg>
<span class="t" style="left:84.44px;top:307.00px;font-size:13.8px;color:#9c9c9c;transform:scaleX(0.9576);">Mate connector 1</span>
<svg class="b" style="left:45.5px;top:330.5px;" width="16" height="16" viewBox="0 0 16 16"><path d="M3.4 11.6 L11.6 1.6 L14.2 3.8 L6 13.6 L2.6 14.4 Z" fill="none" stroke="#a3a8b8" stroke-width="1.1" stroke-linejoin="round"/><path d="M0.6 15.2 H15" stroke="#a3a8b8" stroke-width="1.1"/></svg>
<span class="t" style="left:65.13px;top:333.00px;font-size:13.8px;color:#9c9c9c;transform:scaleX(0.9662);">Layout Sketch</span>
<svg class="b" style="left:46.3px;top:359.5px;" width="8" height="12" viewBox="0 0 8 12"><path d="M1 0.9 L6 5.7 L1 10.5" fill="none" stroke="#444" stroke-width="1.9"/></svg>
<svg class="b" style="left:65.5px;top:358px;" width="16" height="13" viewBox="0 0 16 13"><path d="M0.7 12.2 V0.8 H5.6 L7.2 2.6 H15.2 V12.2 Z" fill="#fff" stroke="#5c5c5c" stroke-width="1.1" stroke-linejoin="round"/></svg>
<span class="t" style="left:86.04px;top:359.00px;font-size:13.8px;color:#2a2a2a;transform:scaleX(0.9418);">Tube (3)</span>
<div class="b" style="left:40px;top:379px;width:200px;height:23.5px;background:#eceff1"></div>
<div class="b" style="left:40px;top:402px;width:200px;height:1.2px;background:#8fc6e6"></div>
<svg class="b" style="left:44.6px;top:387px;" width="12" height="8" viewBox="0 0 12 8"><path d="M0.9 1 L5.7 6 L10.5 1" fill="none" stroke="#444" stroke-width="1.9"/></svg>
<svg class="b" style="left:65.5px;top:384px;" width="16" height="13" viewBox="0 0 16 13"><path d="M0.7 12.2 V0.8 H5.6 L7.2 2.6 H15.2 V12.2 Z" fill="#fff" stroke="#5c5c5c" stroke-width="1.1" stroke-linejoin="round"/></svg>
<span class="t" style="left:85.24px;top:385.00px;font-size:13.8px;color:#2a2a2a;transform:scaleX(0.9635);">Plate (3)</span>
<div class="b" style="left:40px;top:405px;width:200px;height:24px;background:#abd5f1"></div>
<div class="b" style="left:49px;top:405px;width:1px;height:76.5px;background:#cfd6dc"></div>
<div class="b" style="left:45px;top:481px;width:9.5px;height:1px;background:#cfcfcf"></div>
<svg class="b" style="left:65px;top:408.5px;" width="16" height="16" viewBox="0 0 16 16"><path d="M3.4 11.6 L11.6 1.6 L14.2 3.8 L6 13.6 L2.6 14.4 Z" fill="none" stroke="#6f95b8" stroke-width="1.1" stroke-linejoin="round"/><path d="M0.6 15.2 H15" stroke="#6f95b8" stroke-width="1.1"/></svg>
<span class="t" style="left:84.63px;top:411.00px;font-size:13.6px;color:#4f7ea6;font-weight:700;-webkit-text-stroke:0;transform:scaleX(0.9787);">Plate Sketch</span>
<svg class="b" style="left:65px;top:435px;" width="16" height="15" viewBox="0 0 16 15"><path d="M0.8 0.8 H12 Q15 0.8 15 3.6 V14.4 H3.6 Q0.8 14.4 0.8 11.6 Z" fill="#fff" stroke="#a8a8a8" stroke-width="1.1"/><path d="M3.4 3.4 H14.6 M3.4 3.4 V14" stroke="#a8a8a8" stroke-width="0.8" fill="none"/><path d="M6.2 6.4 H15 V14.4 H6.2 Z" fill="#b9b9b9" stroke="#a8a8a8" stroke-width="1"/></svg>
<span class="t" style="left:85.90px;top:437.00px;font-size:13.8px;color:#9c9c9c;font-style:italic;transform:scaleX(0.9605);">Plate Extrude</span>
<svg class="b" style="left:65px;top:461px;" width="16" height="15" viewBox="0 0 16 15"><path d="M0.8 1 L3.6 0.6 L5.4 2.4 V10.6 L7.6 10.2 V14.4 L3.4 14.6 L0.8 12.6 Z" fill="#fff" stroke="#a8a8a8" stroke-width="1.1" stroke-linejoin="round"/><path d="M8.4 0.6 V14.8" stroke="#a8a8a8" stroke-width="0.9"/><path d="M9.6 2.6 L12.4 1 L15 2.6 V14.4 H9.6 Z" fill="#c4c4c4" stroke="#a8a8a8" stroke-width="1"/></svg>
<span class="t" style="left:85.90px;top:463.00px;font-size:13.8px;color:#9c9c9c;font-style:italic;transform:scaleX(0.9765);">Plate Mirror</span>
<svg class="b" style="left:46.3px;top:489.5px;" width="8" height="12" viewBox="0 0 8 12"><path d="M1 0.9 L6 5.7 L1 10.5" fill="none" stroke="#444" stroke-width="1.9"/></svg>
<svg class="b" style="left:65.5px;top:488px;" width="16" height="13" viewBox="0 0 16 13"><path d="M0.7 12.2 V0.8 H5.6 L7.2 2.6 H15.2 V12.2 Z" fill="#fff" stroke="#5c5c5c" stroke-width="1.1" stroke-linejoin="round"/></svg>
<span class="t" style="left:85.66px;top:489.00px;font-size:13.8px;color:#2a2a2a;transform:scaleX(0.9333);">2x1 Tube (2)</span>
<svg class="b" style="left:46.3px;top:515.5px;" width="8" height="12" viewBox="0 0 8 12"><path d="M1 0.9 L6 5.7 L1 10.5" fill="none" stroke="#444" stroke-width="1.9"/></svg>
<svg class="b" style="left:65.5px;top:514px;" width="16" height="13" viewBox="0 0 16 13"><path d="M0.7 12.2 V0.8 H5.6 L7.2 2.6 H15.2 V12.2 Z" fill="#fff" stroke="#5c5c5c" stroke-width="1.1" stroke-linejoin="round"/></svg>
<span class="t" style="left:85.24px;top:515.00px;font-size:13.8px;color:#2a2a2a;transform:scaleX(0.9606);">Polycarb Floor (2)</span>
<svg class="b" style="left:46.5px;top:540px;" width="14" height="13" viewBox="0 0 14 13"><ellipse cx="4.4" cy="4.2" rx="3.6" ry="3.3" fill="none" stroke="#c9c9c9" stroke-width="1"/><ellipse cx="10.4" cy="9.6" rx="2.4" ry="2.3" fill="none" stroke="#c9c9c9" stroke-width="1"/><path d="M1.8 6.6 L8.6 11.6 M7.4 2.4 L12.4 8.2" stroke="#c9c9c9" stroke-width="1"/></svg>
<span class="t" style="left:66.61px;top:541.00px;font-size:13.8px;color:#9c9c9c;font-style:italic;transform:scaleX(0.9424);">Feeeder Wheel Belt</span>
<svg class="b" style="left:196px;top:536.6px;" width="8" height="19" viewBox="0 0 8 19"><circle cx="4" cy="9.4" r="3" fill="#2a2a2a"/><path d="M3.1 0.4h1.8v1.8h-1.8z M3.1 3.5h1.8v1.8h-1.8z M3.1 13.5h1.8v1.8h-1.8z M3.1 16.6h1.8v1.8h-1.8z" fill="#111"/></svg>
<svg class="b" style="left:45px;top:564px;" width="17" height="16" viewBox="0 0 17 16"><path d="M3.2 0.6V4M5.4 0.6V3.2M7.8 1.2V4M10.4 0.4V4" stroke="#9a9a9a" stroke-width="1"/><path d="M1.2 6.4 L14.8 4.6 L16 13.4 L2.2 15.4 Z" fill="#8f8f8f"/><circle cx="6" cy="10" r="2.5" fill="#fff"/><circle cx="11.4" cy="9.4" r="2.5" fill="#fff"/><circle cx="6.3" cy="10.2" r="1.1" fill="#8f8f8f"/><circle cx="11.7" cy="9.6" r="1.1" fill="#8f8f8f"/></svg>
<span class="t" style="left:66.61px;top:567.00px;font-size:13.8px;color:#9c9c9c;font-style:italic;transform:scaleX(0.9399);">Feeder Wheel Shaft</span>
<svg class="b" style="left:196px;top:562.6px;" width="8" height="19" viewBox="0 0 8 19"><circle cx="4" cy="9.4" r="3" fill="#2a2a2a"/><path d="M3.1 0.4h1.8v1.8h-1.8z M3.1 3.5h1.8v1.8h-1.8z M3.1 13.5h1.8v1.8h-1.8z M3.1 16.6h1.8v1.8h-1.8z" fill="#111"/></svg>
<svg class="b" style="left:46.3px;top:593.5px;" width="8" height="12" viewBox="0 0 8 12"><path d="M1 0.9 L6 5.7 L1 10.5" fill="none" stroke="#444" stroke-width="1.9"/></svg>
<svg class="b" style="left:65.5px;top:592px;" width="16" height="13" viewBox="0 0 16 13"><path d="M0.7 12.2 V0.8 H5.6 L7.2 2.6 H15.2 V12.2 Z" fill="#fff" stroke="#5c5c5c" stroke-width="1.1" stroke-linejoin="round"/></svg>
<span class="t" style="left:85.25px;top:593.00px;font-size:13.8px;color:#2a2a2a;transform:scaleX(0.9536);">Pocketing (2)</span>
<div class="b" style="left:45px;top:622px;width:190px;height:7px;background:#b1b1b1"></div>
<div class="b" style="left:40px;top:707px;width:200px;height:1px;background:#cfcfcf"></div>
<svg class="b" style="left:43.8px;top:717.3px;" width="12" height="8" viewBox="0 0 12 8"><path d="M0.9 1 L5.7 6 L10.5 1" fill="none" stroke="#444" stroke-width="1.9"/></svg>
<span class="t" style="left:62.23px;top:715.00px;font-size:13.8px;color:#2a2a2a;transform:scaleX(0.9655);">Parts (2)</span>
<svg class="b" style="left:64.5px;top:738.6px;" width="16" height="16" viewBox="0 0 16 16"><path d="M0.75 8.4 V12.6 L3.25 14.7 H15.1 V2.7 L12.6 0.6 H8.3 V8.4 Z" fill="#fff" stroke="#6a6a6a" stroke-width="1.1" stroke-linejoin="round"/><path d="M0.75 8.4 L3.25 10.5 H10.8 V2.7 H15.1 M10.8 2.7 L8.3 0.6 M3.25 10.5 V14.6" fill="none" stroke="#6a6a6a" stroke-width="1" stroke-linejoin="round"/></svg>
<span class="t" style="left:84.72px;top:741.00px;font-size:13.8px;color:#2a2a2a;transform:scaleX(0.9321);">Origin Cube</span>
<svg class="b" style="left:64.5px;top:764.6px;" width="16" height="16" viewBox="0 0 16 16"><path d="M0.75 8.4 V12.6 L3.25 14.7 H15.1 V2.7 L12.6 0.6 H8.3 V8.4 Z" fill="#fff" stroke="#6a6a6a" stroke-width="1.1" stroke-linejoin="round"/><path d="M0.75 8.4 L3.25 10.5 H10.8 V2.7 H15.1 M10.8 2.7 L8.3 0.6 M3.25 10.5 V14.6" fill="none" stroke="#6a6a6a" stroke-width="1" stroke-linejoin="round"/></svg>
<span class="t" style="left:85.04px;top:767.00px;font-size:13.8px;color:#2a2a2a;transform:scaleX(0.9451);">Tube 1"x1"x12"</span>
<div class="b" style="left:245px;top:538px;width:33px;height:34px;background:#fff;border:1px solid #bdbdbd;border-left:none"></div>
<svg class="b" style="left:252px;top:546px;" width="19" height="19" viewBox="0 0 19 19"><path d="M0.4 1.2 L2.8 3.6 L5.2 1.2" fill="none" stroke="#2b2b2b" stroke-width="1.4"/><path d="M2.8 5.6 V18.4" stroke="#8a8a8a" stroke-width="2"/><path d="M7.4 2.6H18.4M5.4 7.6H18.4M5.4 12.6H18.4M5.4 17.6H18.4" stroke="#2b2b2b" stroke-width="1.2"/></svg>
<div class="b" style="left:322px;top:79px;width:220px;height:220px;background:#fff;box-shadow:0 3px 8px rgba(0,0,0,0.26),0 0 2px rgba(0,0,0,0.14)"></div>
<span class="t" style="left:327.68px;top:87.00px;font-size:13.6px;color:#2a2a2a;font-weight:700;-webkit-text-stroke:0;transform:scaleX(0.9282);">Plate Sketch</span>
<div class="b" style="left:486px;top:79px;width:28px;height:28px;background:#0b8a13"></div>
<svg class="b" style="left:491px;top:85px;" width="18" height="16" viewBox="0 0 18 16"><path d="M2 8.2 L6.8 13 L16 3" fill="none" stroke="#fff" stroke-width="2.6"/></svg>
<svg class="b" style="left:521.5px;top:87.5px;" width="13" height="13" viewBox="0 0 13 13"><path d="M1.6 1.6 L11.4 11.4 M11.4 1.6 L1.6 11.4" stroke="#c6283a" stroke-width="2.7"/></svg>
<div class="b" style="left:322px;top:107px;width:220px;height:1px;background:#dedede"></div>
<div class="b" style="left:325px;top:113px;width:188px;height:43.5px;border:1px solid #cdcdcd;background:#fff"></div>
<span class="t" style="left:330.54px;top:120.00px;font-size:9.6px;color:#585858;transform:scaleX(1.0613);">Sketch plane</span>
<span class="t" style="left:331.35px;top:139.00px;font-size:13.8px;color:#555;transform:scaleX(0.9490);">Face of Tube Extrude</span>
<svg class="b" style="left:492px;top:141px;" width="10" height="10" viewBox="0 0 10 10"><path d="M1 1 L8.6 8.6 M8.6 1 L1 8.6" stroke="#555" stroke-width="1.1"/></svg>
<svg class="b" style="left:517px;top:116.5px;" width="18" height="18" viewBox="0 0 18 18"><circle cx="9" cy="8.8" r="8.1" fill="none" stroke="#444" stroke-width="1"/><circle cx="9" cy="8.8" r="5.9" fill="none" stroke="#444" stroke-width="1.1"/><path d="M9 3 V8.8 H14.8" fill="none" stroke="#444" stroke-width="1.2"/></svg>
<svg class="b" style="left:326.2px;top:170.3px;" width="12" height="12" viewBox="0 0 12 12"><rect x="0.2" y="0.2" width="11.6" height="11.6" rx="2" fill="#1957b0"/><path d="M2.6 6.2 L5 8.6 L9.4 3.6" fill="none" stroke="#fff" stroke-width="1.7"/></svg>
<span class="t" style="left:341.11px;top:170.00px;font-size:13.8px;color:#444;transform:scaleX(0.9851);">Disable imprinting</span>
<svg class="b" style="left:326.2px;top:197.5px;" width="12" height="12" viewBox="0 0 12 12"><rect x="0.6" y="0.6" width="10.8" height="10.8" rx="2" fill="#fff" stroke="#7a7a7a" stroke-width="1"/></svg>
<span class="t" style="left:341.60px;top:198.00px;font-size:13.8px;color:#444;transform:scaleX(0.9684);">Show constraints</span>
<svg class="b" style="left:326.2px;top:225.2px;" width="12" height="12" viewBox="0 0 12 12"><rect x="0.2" y="0.2" width="11.6" height="11.6" rx="2" fill="#1957b0"/><path d="M2.6 6.2 L5 8.6 L9.4 3.6" fill="none" stroke="#fff" stroke-width="1.7"/></svg>
<span class="t" style="left:341.61px;top:225.00px;font-size:13.8px;color:#444;transform:scaleX(0.9515);">Show expressions</span>
<svg class="b" style="left:326.2px;top:252px;" width="12" height="12" viewBox="0 0 12 12"><rect x="0.2" y="0.2" width="11.6" height="11.6" rx="2" fill="#1957b0"/><path d="M2.6 6.2 L5 8.6 L9.4 3.6" fill="none" stroke="#fff" stroke-width="1.7"/></svg>
<span class="t" style="left:341.60px;top:252.00px;font-size:13.8px;color:#444;transform:scaleX(0.9662);">Show errors</span>
<div class="b" style="left:441.2px;top:274.3px;width:21.8px;height:21.5px;border:1px solid #979797;border-radius:3.5px;background:#fff"></div>
<svg class="b" style="left:442.2px;top:275px;" width="20" height="20" viewBox="0 0 20 20"><circle cx="9.8" cy="9.9" r="8.5" fill="none" stroke="#262626" stroke-width="1.4"/><path d="M5.8 13.6 L7.6 8.6 L13.6 2.8 L16.6 5.6 L10.6 11.6 Z" fill="#fff" stroke="#262626" stroke-width="1.2" stroke-linejoin="round"/><path d="M7.6 8.6 L10.6 11.6 M11.6 4.8 L14.6 7.6" stroke="#262626" stroke-width="0.8"/><path d="M2.4 14 H15.2" stroke="#1b55a8" stroke-width="1.3"/><path d="M15.6 16 L18.6 18.8" stroke="#262626" stroke-width="2"/></svg>
<div class="b" style="left:467.3px;top:274.3px;width:48.6px;height:21.5px;border:1px solid #979797;border-radius:3.5px;background:#fff"></div>
<span class="t" style="left:477.78px;top:279.00px;font-size:13.4px;color:#222;transform:scaleX(0.9483);">Final</span>
<svg class="b" style="left:525px;top:282px;" width="13" height="13" viewBox="0 0 13 13"><circle cx="6.2" cy="6.2" r="6" fill="#a9a9a9"/></svg>
<span class="t" style="left:527.78px;top:283.00px;font-size:10.5px;color:#fff;font-weight:700;-webkit-text-stroke:0;transform:scaleX(1.1018);">?</span>
<svg class="b" style="left:0;top:0" width="1919" height="1079" viewBox="0 0 1919 1079"><defs><linearGradient id="gg" x1="0" x2="1" y1="0" y2="0"><stop offset="0" stop-color="#3d893d"/><stop offset="0.5" stop-color="#3d8b3f"/><stop offset="1" stop-color="#449348"/></linearGradient></defs><rect x="583" y="649.6" width="914" height="76.8" fill="url(#gg)" stroke="#101010" stroke-width="1.5"/><rect x="963.9" y="726.4" width="152.4" height="152.4" fill="#bbbbbb" stroke="#101010" stroke-width="1.5"/><path d="M583 726.4 H1497" stroke="#101010" stroke-width="1.5"/><circle cx="621.50" cy="687.9" r="7.4" fill="#fff" stroke="#0c160c" stroke-width="1.5"/><circle cx="659.58" cy="687.9" r="7.4" fill="#fff" stroke="#0c160c" stroke-width="1.5"/><circle cx="697.65" cy="687.9" r="7.4" fill="#fff" stroke="#0c160c" stroke-width="1.5"/><circle cx="735.73" cy="687.9" r="7.4" fill="#fff" stroke="#0c160c" stroke-width="1.5"/><circle cx="773.80" cy="687.9" r="7.4" fill="#fff" stroke="#0c160c" stroke-width="1.5"/><circle cx="811.88" cy="687.9" r="7.4" fill="#fff" stroke="#0c160c" stroke-width="1.5"/><circle cx="849.95" cy="687.9" r="7.4" fill="#fff" stroke="#0c160c" stroke-width="1.5"/><circle cx="888.03" cy="687.9" r="7.4" fill="#fff" stroke="#0c160c" stroke-width="1.5"/><circle cx="926.10" cy="687.9" r="7.4" fill="#fff" stroke="#0c160c" stroke-width="1.5"/><circle cx="964.17" cy="687.9" r="7.4" fill="#fff" stroke="#0c160c" stroke-width="1.5"/><circle cx="1002.25" cy="687.9" r="7.4" fill="#fff" stroke="#0c160c" stroke-width="1.5"/><circle cx="1040.33" cy="687.9" r="7.4" fill="#fff" stroke="#0c160c" stroke-width="1.5"/><circle cx="1078.40" cy="687.9" r="7.4" fill="#fff" stroke="#0c160c" stroke-width="1.5"/><circle cx="1116.47" cy="687.9" r="7.4" fill="#fff" stroke="#0c160c" stroke-width="1.5"/><circle cx="1154.55" cy="687.9" r="7.4" fill="#fff" stroke="#0c160c" stroke-width="1.5"/><circle cx="1192.62" cy="687.9" r="7.4" fill="#fff" stroke="#0c160c" stroke-width="1.5"/><circle cx="1230.70" cy="687.9" r="7.4" fill="#fff" stroke="#0c160c" stroke-width="1.5"/><circle cx="1268.78" cy="687.9" r="7.4" fill="#fff" stroke="#0c160c" stroke-width="1.5"/><circle cx="1306.85" cy="687.9" r="7.4" fill="#fff" stroke="#0c160c" stroke-width="1.5"/><circle cx="1344.93" cy="687.9" r="7.4" fill="#fff" stroke="#0c160c" stroke-width="1.5"/><circle cx="1383.00" cy="687.9" r="7.4" fill="#fff" stroke="#0c160c" stroke-width="1.5"/><circle cx="1421.08" cy="687.9" r="7.4" fill="#fff" stroke="#0c160c" stroke-width="1.5"/><circle cx="1459.15" cy="687.9" r="7.4" fill="#fff" stroke="#0c160c" stroke-width="1.5"/><circle cx="1040" cy="726.3" r="4.2" fill="#fff" stroke="#101010" stroke-width="1.3"/><circle cx="1040" cy="726.3" r="1.4" fill="#101010"/><circle cx="659.3" cy="419.5" r="43.3" fill="#e4e7ea" stroke="#111" stroke-width="2.2"/><circle cx="659.3" cy="419.5" r="3.2" fill="#111"/><circle cx="984.8" cy="389.0" r="62.5" fill="#e4e7ea" stroke="#111" stroke-width="2.2"/><circle cx="984.8" cy="389.0" r="3.2" fill="#111"/><rect x="434" y="347.5" width="1212.4" height="681.4" fill="none" stroke="#a4d3ef" stroke-width="1.15"/><path d="M669.56 418.54 L973.85 390.03" stroke="#111" stroke-width="2.2" stroke-dasharray="29.6 6.2 4 6.2" fill="none"/><path d="M1060.79 382.08 A76.3 76.3 0 0 0 908.81 395.92 A76.3 76.3 0 0 0 1060.79 382.08" fill="none" stroke="#111" stroke-width="2.2" stroke-dasharray="29.6 6.2 4 6.2" stroke-dashoffset="42.7"/><circle cx="977.9" cy="313.0" r="7.45" fill="#e4e7ea" stroke="#111" stroke-width="1.9"/><circle cx="977.9" cy="313.0" r="2.7" fill="#111"/><path d="M1041.02 331.42 A7.45 7.45 0 0 0 1026.26 329.34 A7.45 7.45 0 0 0 1041.02 331.42" fill="none" stroke="#111" stroke-width="1.9" stroke-dasharray="29.6 6.2 4 6.2"/><circle cx="1033.6" cy="330.4" r="2.7" fill="#111"/><circle cx="1060.8" cy="382.1" r="7.45" fill="#e4e7ea" stroke="#111" stroke-width="1.9"/><circle cx="1060.8" cy="382.1" r="2.7" fill="#111"/><path d="M1042.38 445.22 A7.45 7.45 0 0 0 1044.46 430.46 A7.45 7.45 0 0 0 1042.38 445.22" fill="none" stroke="#111" stroke-width="1.9" stroke-dasharray="29.6 6.2 4 6.2"/><circle cx="1043.4" cy="437.8" r="2.7" fill="#111"/><circle cx="991.7" cy="465.0" r="7.45" fill="#e4e7ea" stroke="#111" stroke-width="1.9"/><circle cx="991.7" cy="465.0" r="2.7" fill="#111"/><path d="M928.58 446.58 A7.45 7.45 0 0 0 943.34 448.66 A7.45 7.45 0 0 0 928.58 446.58" fill="none" stroke="#111" stroke-width="1.9" stroke-dasharray="29.6 6.2 4 6.2"/><circle cx="936.0" cy="447.6" r="2.7" fill="#111"/><path d="M904.33 389.97 A7.45 7.45 0 0 0 913.30 401.87 A7.45 7.45 0 0 0 904.33 389.97" fill="none" stroke="#111" stroke-width="1.9" stroke-dasharray="29.6 6.2 4 6.2"/><circle cx="908.8" cy="395.9" r="2.7" fill="#111"/><circle cx="926.2" cy="340.2" r="7.45" fill="#fdfdfd" stroke="#111" stroke-width="1.9"/><circle cx="926.2" cy="340.2" r="2.7" fill="#111"/><path d="M654.6 493.7 L655.5 477.9" stroke="#111" stroke-width="1.25" fill="none"/><path d="M656.3 463.4 L658.8 478.1 L652.2 477.7 Z" fill="#111"/><path d="M866.0 267.5 L915.8 326.7" stroke="#111" stroke-width="1.25" fill="none"/><path d="M921.3 333.2 L913.9 328.3 L917.7 325.1 Z" fill="#111"/><path d="M965.6 251.4 L933.1 325.0" stroke="#111" stroke-width="1.25" fill="none"/><path d="M927.2 338.3 L930.0 323.7 L936.1 326.4 Z" fill="#111"/><path d="M1119.4 316.7 L1065.4 345.4" stroke="#111" stroke-width="1.25" fill="none"/><path d="M1052.6 352.2 L1063.9 342.5 L1067.0 348.3 Z" fill="#111"/><path d="M1123.0 420.8 L1060.7 406.5" stroke="#111" stroke-width="1.25" fill="none"/><path d="M1046.6 403.2 L1061.5 403.2 L1060.0 409.7 Z" fill="#111"/></svg>
<span class="t" style="left:440.09px;top:357.00px;font-size:18px;color:#9dcbe9;transform:scaleX(1.1172);">Plate Sketch</span>
<div class="b" style="left:798px;top:214.4px;width:113.2px;height:23.4px;background:#d6ecf5;border-radius:4px"></div>
<span class="t" style="left:802.47px;top:219.00px;font-size:14px;color:#1f2d3a;transform:scaleX(0.9806);">#CloseFit_10_32</span>
<span class="t" style="left:806.5px;top:244.5px;font-size:15.5px;color:#858585;font-family:'Liberation Serif',serif;font-style:italic;letter-spacing:-0.3px;-webkit-text-stroke:0.2px">fx</span>
<span class="t" style="left:826.14px;top:246.00px;font-size:16.6px;color:#151515;transform:scaleX(1.0451);">Ø0.196</span>
<span class="t" style="left:956.55px;top:231.00px;font-size:16.6px;color:#151515;transform:scaleX(1.0636);">8x</span>
<span class="t" style="left:1125.47px;top:301.00px;font-size:16.6px;color:#151515;transform:scaleX(0.9764);">Ø2</span>
<span class="t" style="left:1128.25px;top:420.00px;font-size:16.6px;color:#151515;transform:scaleX(1.0179);">Ø1.625</span>
<span class="t" style="left:625.66px;top:501.00px;font-size:16.6px;color:#151515;">Ø1.125</span>
<svg class="b" style="left:0;top:0" width="1919" height="1079" viewBox="0 0 1919 1079"><path d="M1811.7 137.5 H1848.3 L1858.3 147.5 V184.2 L1848.3 194.2 H1811.7 L1801.7 184.2 V147.5 Z" fill="#e6e9ec"/><path d="M1814 143.4 H1845.6 L1852 149.8 V181.8 L1845.6 188.2 H1814 L1807.6 181.8 V149.8 Z" fill="#fff"/><path d="M1806.4 142.4 L1811 147 M1853.4 142.4 L1849 147 M1806.4 189.4 L1811 184.8 M1853.4 189.4 L1849 184.8" stroke="#f1f3f5" stroke-width="1.2"/><path d="M1799.5 137.5 V196.2" stroke="#3a34c8" stroke-width="1.2"/><path d="M1799 196.1 H1858.8" stroke="#37b437" stroke-width="1.2"/><path d="M1830 92 L1836.4 100.8 H1823.6 Z" fill="#e6e9ec"/><path d="M1830 239.6 L1836.4 230.8 H1823.6 Z" fill="#e6e9ec"/><path d="M1755.8 166 L1765 160 V172 Z" fill="#e6e9ec"/><path d="M1904.2 166 L1895.2 160 V172 Z" fill="#e6e9ec"/><path d="M1808.6 102.4 C1797 106 1787 112 1780.6 120.4" fill="none" stroke="#e6e9ec" stroke-width="4.4"/><path d="M1776.4 124.6 L1777.6 113.6 L1787 123 Z" fill="#e6e9ec"/><path d="M1851.4 102.4 C1863 106 1873 112 1879.4 120.4" fill="none" stroke="#e6e9ec" stroke-width="4.4"/><path d="M1883.6 124.6 L1882.4 113.6 L1873 123 Z" fill="#e6e9ec"/><path d="M1875 222.8 L1884 226.6 V236.8 L1875 240.8 L1866 236.8 V226.6 Z" fill="#e0e0e0" stroke="#333" stroke-width="1" stroke-linejoin="round"/><path d="M1866 226.6 L1875 230.2 V240.8 L1866 236.8 Z" fill="#7d7d7d"/><path d="M1875 230.2 L1884 226.6 V236.8 L1875 240.8 Z" fill="#c9c9c9"/><path d="M1866 226.6 L1875 230.2 L1884 226.6 M1875 230.2 V240.8" fill="none" stroke="#333" stroke-width="0.8"/><path d="M1892 229.8 H1900 L1896 233.8 Z" fill="#222"/></svg>
<span class="t" style="left:1815.03px;top:158.00px;font-size:12.4px;color:#1a1a1a;transform:scaleX(0.9785);">Right</span>
<span class="t" style="left:1795.64px;top:122.00px;font-size:11.5px;color:#5a4fd0;transform:scaleX(1.0435);">Z</span>
<span class="t" style="left:1864.78px;top:191.00px;font-size:11.5px;color:#2fa02f;transform:scaleX(0.9461);">Y</span>
<div class="b" style="left:1888px;top:433px;width:32px;height:132.5px;background:#f8f8f8;border:1px solid #bdbdbd;border-right:none"></div>
<div class="b" style="left:1888px;top:466px;width:31px;height:1px;background:#bdbdbd"></div>
<div class="b" style="left:1888px;top:499px;width:31px;height:1px;background:#bdbdbd"></div>
<div class="b" style="left:1888px;top:532px;width:31px;height:1px;background:#bdbdbd"></div>
<div class="b" style="left:1888px;top:576px;width:32px;height:100px;background:#f8f8f8;border:1px solid #bdbdbd;border-right:none"></div>
<div class="b" style="left:1888px;top:609px;width:31px;height:1px;background:#bdbdbd"></div>
<div class="b" style="left:1888px;top:642px;width:31px;height:1px;background:#bdbdbd"></div>
<svg class="b" style="left:1894px;top:440px;" width="22" height="22" viewBox="0 0 22 22"><path d="M5.5 13.6 L11.3 1.4 L14.6 3 L9.4 14 Z" fill="#7d7d7d"/><path d="M9.4 14 L14.8 3 L18.2 6.2 L13.9 14 Z" fill="#a0a0a0"/><path d="M13.9 14 L18.5 6.2 L21 10.8 L20 14 Z" fill="#c6c6c6"/><rect x="1.8" y="14" width="19.2" height="6" rx="2" fill="#f2f2f2" stroke="#8a8a8a" stroke-width="1"/><path d="M15.4 14.5 H20 Q20.5 14.5 20.5 15 V19 Q20.5 19.5 20 19.5 H15.4 Z" fill="#c9c9c9"/><path d="M9.6 14.4 V19.6" stroke="#aaa" stroke-width="0.8"/><circle cx="4.4" cy="17.1" r="1.1" fill="#666"/></svg>
<svg class="b" style="left:1894px;top:473px;" width="22" height="22" viewBox="0 0 22 22"><path d="M12.6 4.6 L20.4 8.2 V16.4 L12.6 20.2 L5.2 16.4 V8.2 Z" fill="#fff" stroke="#2b2b2b" stroke-width="1.2" stroke-linejoin="round"/><path d="M5.2 8.2 L12.6 12 L20.4 8.2 M12.6 12 V20" fill="none" stroke="#2b2b2b" stroke-width="1.1"/><g transform="translate(0.8,0.8)"><path d="M0.5 0.5 H10.1 V8.2 H0.5 Z" fill="#1b55a8"/><path d="M0.5 3.05H10.1M0.5 5.65H10.1M3.7 0.5V8.2M6.9 0.5V8.2" stroke="#fff" stroke-width="0.8"/></g></svg>
<svg class="b" style="left:1894px;top:506px;" width="22" height="22" viewBox="0 0 22 22"><path d="M13 7.6 L18 10 V15.4 L13 17.8 L8 15.4 V10 Z" fill="#fff" stroke="#2b2b2b" stroke-width="1" stroke-linejoin="round"/><path d="M8 10 L13 12.4 L18 10 M13 12.4 V17.6" fill="none" stroke="#2b2b2b" stroke-width="0.9"/><path d="M13 12.6 L17.8 10.2 V15.2 L13 17.6 Z" fill="#d5d5d5"/><path d="M6 6.6 C3.8 6.6 5 10 4.4 11.8 C4.2 12.6 3.4 13 2.8 13.2 C3.4 13.4 4.2 13.8 4.4 14.6 C5 16.4 3.8 20.2 6 20.2 M18.8 6.6 C21 6.6 19.8 10 20.4 11.8 C20.6 12.6 21 13 21.6 13.2 C21 13.4 20.6 13.8 20.4 14.6 C19.8 16.4 21 20.2 18.8 20.2" fill="none" stroke="#2b2b2b" stroke-width="1.2"/><g transform="translate(0.8,0.8)"><path d="M0.5 0.5 H10.1 V8.2 H0.5 Z" fill="#333"/><path d="M0.5 3.05H10.1M0.5 5.65H10.1M3.7 0.5V8.2M6.9 0.5V8.2" stroke="#fff" stroke-width="0.8"/></g></svg>
<svg class="b" style="left:1894px;top:539px;" width="22" height="22" viewBox="0 0 22 22"><path d="M4.4 6.6 C1.6 10.2 1.6 16 4.4 19.8 M18.4 6.6 C21.2 10.2 21.2 16 18.4 19.8" fill="none" stroke="#2b2b2b" stroke-width="2"/><g transform="translate(0.8,0.8)"><path d="M0.5 0.5 H10.1 V8.2 H0.5 Z" fill="#333"/><path d="M0.5 3.05H10.1M0.5 5.65H10.1M3.7 0.5V8.2M6.9 0.5V8.2" stroke="#fff" stroke-width="0.8"/></g></svg>
<span class="t" style="left:1899px;top:542.5px;font-size:21px;font-family:'Liberation Serif',serif;font-style:italic;font-weight:700;color:#1a1a1a;-webkit-text-stroke:0.5px">x</span>
<svg class="b" style="left:1893px;top:581px;" width="24" height="24" viewBox="0 0 24 24"><rect x="0.3" y="0" width="23.4" height="23.6" rx="3.5" fill="#dcdcdc"/><path d="M2 9 L12 6 L20.6 7.2 L21.4 10 L20.4 17.6 L12 20.6 L3 19.2 L1.8 13 Z" fill="#2b2b2b"/><circle cx="8" cy="13" r="3.2" fill="#e8f1ff"/><circle cx="15.6" cy="11.8" r="3" fill="#e8f1ff"/><circle cx="8.3" cy="13.2" r="1.7" fill="#2c6fd2"/><circle cx="15.9" cy="12" r="1.6" fill="#2c6fd2"/><path d="M10.4 17.2 C12 18 14 17.4 15 16.2" fill="none" stroke="#fff" stroke-width="0.9"/><path d="M10.8 3.2V7" stroke="#2b2b2b" stroke-width="1.4"/><circle cx="10.8" cy="3.2" r="1.2" fill="#2b2b2b"/><path d="M5.6 3V5.6M7.6 2.4V5.4M14 2.4V5.4M16 3V5.6" stroke="#3a66c4" stroke-width="1.1"/></svg>
<svg class="b" style="left:1893px;top:614px;" width="24" height="24" viewBox="0 0 24 24"><rect x="0.3" y="0.2" width="23.4" height="23.4" rx="3" fill="#d3ead3"/><rect x="2" y="1.8" width="20.2" height="20" fill="#4caf50"/><path d="M4.8 6.2 C7.4 5 9.8 5.4 11.4 7 V18 C9.8 16.8 7.4 16.6 4.8 17.4 Z M19.4 6.2 C16.8 5 14.4 5.4 12.8 7 V18 C14.4 16.8 16.8 16.6 19.4 17.4 Z" fill="#fff"/></svg>
<svg class="b" style="left:1893px;top:647px;" width="24" height="24" viewBox="0 0 24 24"><rect x="0.3" y="0.2" width="23.4" height="23.4" rx="3" fill="#dde4f0"/><rect x="2.6" y="2.4" width="19" height="18.8" fill="#1762d8" stroke="#1a1a1a" stroke-width="1.4"/><path d="M4.8 6.2 C7.4 5 9.8 5.4 11.4 7 V18 C9.8 16.8 7.4 16.6 4.8 17.4 Z M19.4 6.2 C16.8 5 14.4 5.4 12.8 7 V18 C14.4 16.8 16.8 16.6 19.4 17.4 Z" fill="#fff"/><path d="M12.1 7 V18" stroke="#9a9a9a" stroke-width="0.7"/></svg>
<svg class="b" style="left:1822px;top:1029px;" width="17" height="14" viewBox="0 0 17 14"><path d="M6 4.2 V7.6 H0.8 V12.6 H10.4 C13.8 12.6 16 11.2 16 9.2 V4.2" fill="#fff" stroke="#2b2b2b" stroke-width="1.2" stroke-linejoin="round"/><ellipse cx="11" cy="4.2" rx="5" ry="3.3" fill="#fff" stroke="#2b2b2b" stroke-width="1.2"/><ellipse cx="11" cy="4.2" rx="2.3" ry="1.3" fill="none" stroke="#2b2b2b" stroke-width="1"/><path d="M0.8 12.2 H11" stroke="#2b2b2b" stroke-width="1.7"/><path d="M3 9.8V12M5.2 9.8V12M7.4 9.8V12M9.6 9.8V12" stroke="#2b2b2b" stroke-width="0.7"/></svg>
<svg class="b" style="left:1855px;top:1029px;" width="21" height="15" viewBox="0 0 21 15"><path d="M0.8 13.4 C0.8 5.6 5 1 10.4 1 C15.8 1 20 5.6 20 13.4 Z" fill="#fff" stroke="#2b2b2b" stroke-width="1.3" stroke-linejoin="round"/><path d="M3.4 11 C3.8 6.4 6.6 3.6 10.4 3.6 C14.2 3.6 17 6.4 17.4 11" fill="none" stroke="#777" stroke-width="0.9" stroke-dasharray="1 1"/><path d="M6.4 13 C6.4 9.4 8 7.6 10.4 7.6 C12.8 7.6 14.4 9.4 14.4 13" fill="none" stroke="#2b2b2b" stroke-width="1.9"/></svg>
<svg class="b" style="left:1892px;top:1028px;" width="16" height="16" viewBox="0 0 16 16"><path d="M8 0.6V12.6M2.4 2.6H13.6" stroke="#2b2b2b" stroke-width="1.3"/><path d="M3 2.8 L0.8 9.6 H5.2 Z M13 2.8 L10.8 9.6 H15.2 Z" fill="none" stroke="#2b2b2b" stroke-width="0.9" stroke-linejoin="round"/><path d="M0.8 9.8H5.2M10.8 9.8H15.2" stroke="#2b2b2b" stroke-width="1.6"/><path d="M1.2 12.4H14.8M1.2 14.8H14.8" stroke="#2b2b2b" stroke-width="1.5"/></svg>
<div class="b" style="left:40px;top:1049px;width:1879px;height:30px;background:#d6d6d6;border-top:1px solid #c9c9c9"></div>
<svg class="b" style="left:0;top:0" width="1919" height="1079" viewBox="0 0 1919 1079"><path d="M56.5 1057.2V1071.8M49.1 1064.5H63.9" stroke="#555" stroke-width="2.8"/><path d="M75.5 1050.6 H108.2 L116.5 1063.8 L108.2 1077 H75.5 Q73.5 1077 73.5 1075 V1052.6 Q73.5 1050.6 75.5 1050.6 Z" fill="#e8e8e8"/><path d="M73.2 1051 V1077" stroke="#c2c2c2" stroke-width="1"/><path d="M108.2 1050.6 H238.3 L245 1063.8 L238.3 1077 H108.2 L116.5 1063.8 Z" fill="#fcfcfc"/><path d="M108.2 1050.6 L116.5 1063.8 L108.2 1077" fill="none" stroke="#d2d2d2" stroke-width="1"/><path d="M239.4 1050.6 L246.2 1063.8 L239.4 1077" fill="none" stroke="#dedede" stroke-width="1.6"/><path d="M92 1053 L95.9 1056.7 V1054 H98.9 V1059.6 L100.9 1061.5 V1070.7 H94.4 V1065 H89.9 V1070.7 H82.9 V1061.5 Z" fill="#575757"/><path d="M246.8 1076.8 V1053 Q246.8 1050.5 249.3 1050.5 H445.4 Q448 1050.5 448 1053 V1076.8 Z" fill="#e7e7e7"/><path d="M449.5 1049 H648.6 V1074.5 Q648.6 1078 645 1078 H453 Q449.5 1078 449.5 1074.5 Z" fill="#1b4fa3"/><path d="M449.5 1049 H648.6 V1073.4 Q648.6 1075.6 646 1075.6 H452 Q449.5 1075.6 449.5 1073.4 Z" fill="#fff"/><path d="M649.2 1050 V1077" stroke="#cdcdcd" stroke-width="1"/><circle cx="267" cy="1062.4" r="7" fill="#6b9fd5"/><path d="M267 1055.6V1069.2" stroke="#cfeaf8" stroke-width="1.7" stroke-dasharray="2.2 9.2 2.2"/><circle cx="267" cy="1062.4" r="2.5" fill="#f4fbff"/><path d="M278.4 1054.5 H291.7 L295.5 1057.8 V1071.3 H281.9 L278.4 1068.1 Z" fill="#fff" stroke="#2b2b2b" stroke-width="1.4" stroke-linejoin="round"/><path d="M279.2 1055.4 H290.8 V1066.6 H279.2 Z" fill="#8e8e8e"/><path d="M282.8 1057.6 H290.8 V1066.6 H282.8 Z" fill="#848484"/><path d="M279.2 1055.4 L282.8 1057.6" stroke="#6a6a6a" stroke-width="0.8"/><path d="M278.6 1068 L282 1066.4" stroke="#2b2b2b" stroke-width="0.9"/><path d="M461.6 1060.2 L464.6 1058.8 L468.6 1059.8 V1071.2 H464 L461.6 1069.6 Z" fill="#fff" stroke="#2b2b2b" stroke-width="1.1" stroke-linejoin="round"/><path d="M464.6 1061 V1071" stroke="#2b2b2b" stroke-width="0.9"/><path d="M468.8 1056.2 L472.4 1054.6 L477.4 1056 V1071.2 H471.6 L468.8 1069.6 Z" fill="#fff" stroke="#2b2b2b" stroke-width="1.1" stroke-linejoin="round"/><path d="M472.2 1057.6 V1071 M469 1056.4 L472.2 1057.6 L477.2 1056.2" fill="none" stroke="#2b2b2b" stroke-width="0.9"/></svg>
<span class="t" style="left:129.30px;top:1056.00px;font-size:14.5px;color:#666;transform:scaleX(0.9445);">Exercise 1: Flat</span>
<span class="t" style="left:299.70px;top:1057.00px;font-size:14.5px;color:#666;transform:scaleX(0.9517);">Exercise 1 Assembly</span>
<span class="t" style="left:481.61px;top:1057.00px;font-size:14.5px;color:#2a2a2a;transform:scaleX(0.9407);">Exercise 1 Part Studio</span>
</div></body></html>
